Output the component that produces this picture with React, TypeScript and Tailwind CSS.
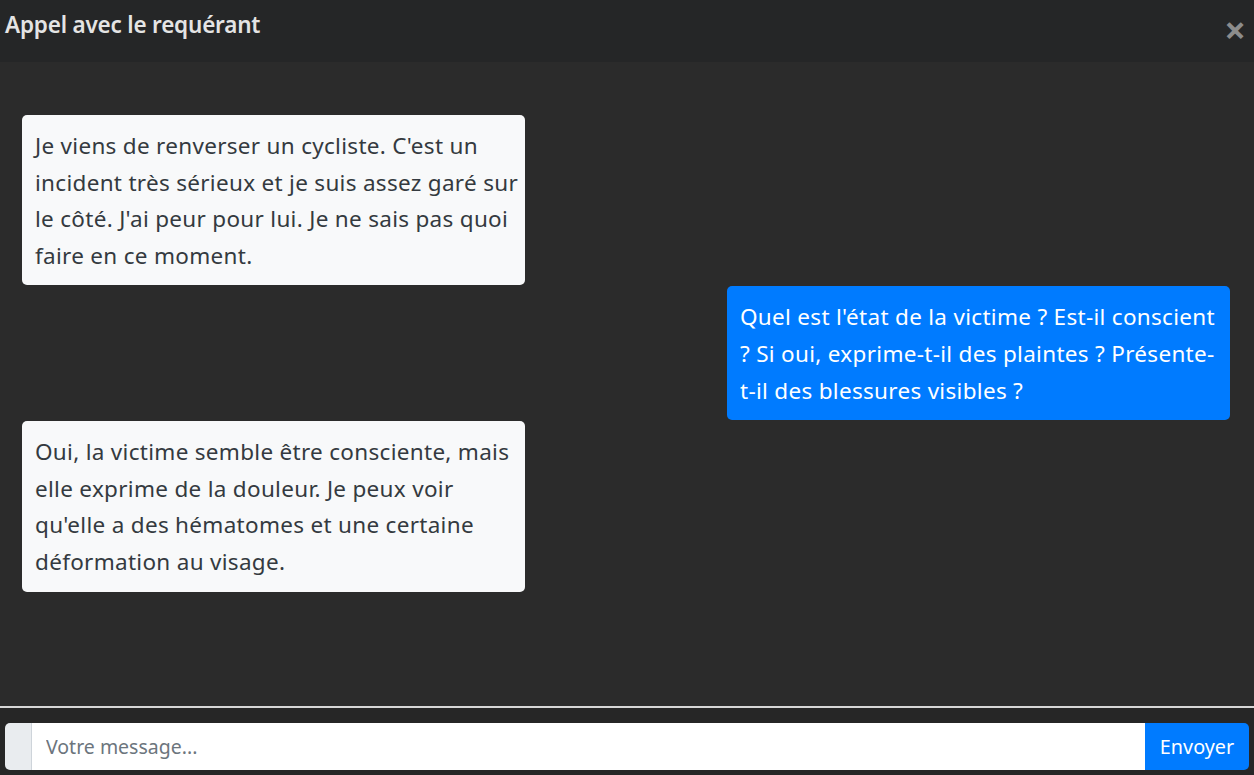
import React from 'react';

interface Message {
  id: number;
  from: 'caller' | 'operator';
  lines: string[];
}

const messages: Message[] = [
  {
    id: 1,
    from: 'caller',
    lines: [
      "Je viens de renverser un cycliste. C'est un",
      'incident très sérieux et je suis assez garé sur',
      "le côté. J'ai peur pour lui. Je ne sais pas quoi",
      'faire en ce moment.',
    ],
  },
  {
    id: 2,
    from: 'operator',
    lines: [
      "Quel est l'état de la victime ? Est-il conscient",
      '? Si oui, exprime-t-il des plaintes ? Présente-',
      't-il des blessures visibles ?',
    ],
  },
  {
    id: 3,
    from: 'caller',
    lines: [
      'Oui, la victime semble être consciente, mais',
      'elle exprime de la douleur. Je peux voir',
      "qu'elle a des hématomes et une certaine",
      'déformation au visage.',
    ],
  },
];

const App: React.FC = () => {
  return (
    <div
      className="flex flex-col h-[775px] w-full bg-[#2b2b2b] overflow-hidden"
      style={{ fontFamily: '"Noto Sans", "Open Sans", sans-serif' }}
    >
      {/* Header */}
      <div className="h-[62px] flex-shrink-0 bg-[#252627] flex items-start justify-between pl-[5px] pr-[8px]">
        <h1 className="mt-[9px] text-[22.5px] leading-[32px] font-semibold text-[#e4e4e4] tracking-[-0.2px]">
          Appel avec le requérant
        </h1>
        <button className="mt-[13px] text-[#8c8c8c] text-[38px] leading-[32px] font-bold">
          ×
        </button>
      </div>

      {/* Messages */}
      <div className="flex-1 flex flex-col pt-[53px] px-[22px] pr-[24px] gap-px">
        {messages.map((m) => (
          <div
            key={m.id}
            className={`w-[503px] rounded-[5px] px-[13px] pt-[13px] pb-[11px] text-[22.5px] leading-[36.6px] tracking-[0.3px] whitespace-nowrap ${
              m.from === 'caller'
                ? 'self-start bg-[#f8f9fa] text-[#343a40]'
                : 'self-end bg-[#007bff] text-white'
            }`}
          >
            {m.lines.map((line, i) => (
              <div key={i}>{line}</div>
            ))}
          </div>
        ))}
      </div>

      {/* Footer */}
      <div className="flex-shrink-0 border-t-2 border-[#d6d6d6] bg-[#262626] px-[5px] pt-[15px] pb-[5px]">
        <div className="flex h-[47px] rounded-[5px] overflow-hidden">
          <div className="w-[27px] bg-[#e9ecef] border-r border-[#ced4da]" />
          <input
            className="flex-1 bg-white px-[14px] text-[19.5px] text-[#495057] placeholder-[#6c757d] outline-none"
            placeholder="Votre message..."
          />
          <button className="w-[104px] bg-[#007bff] text-white text-[19.8px]">Envoyer</button>
        </div>
      </div>
    </div>
  );
};

export default App;
